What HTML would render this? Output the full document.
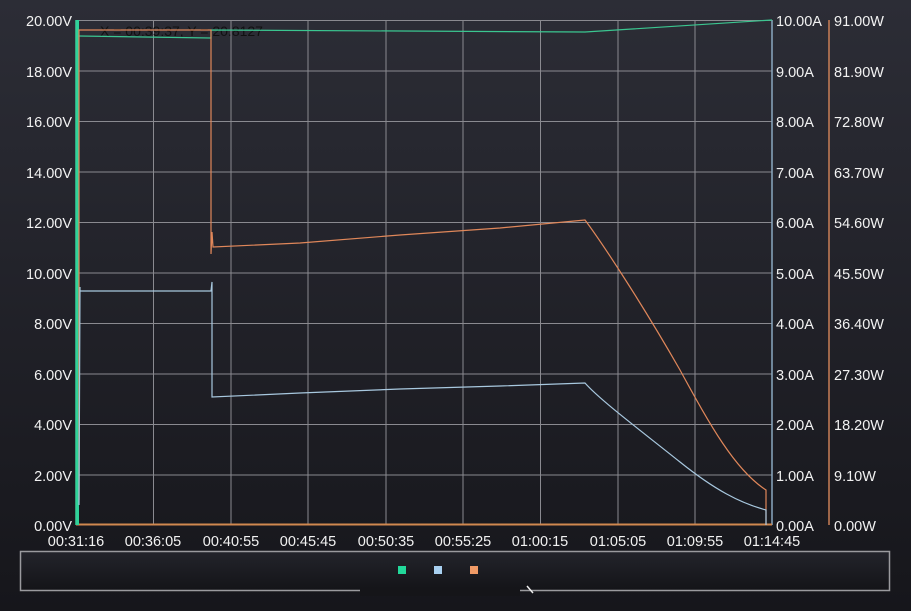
<!DOCTYPE html>
<html><head><meta charset="utf-8"><style>
html,body{margin:0;padding:0;width:911px;height:611px;overflow:hidden;background:linear-gradient(#2c2d36,#16161b);}
svg{position:absolute;left:0;top:0}
text{font-family:"Liberation Sans",sans-serif;font-size:14.5px;fill:#f2f2f2}
</style></head><body>
<svg width="911" height="611" viewBox="0 0 911 611">
<defs><linearGradient id="lg" x1="0" y1="0" x2="0" y2="1"><stop offset="0" stop-color="#23242b"/><stop offset="1" stop-color="#141418"/></linearGradient></defs>
<g stroke="#8a8a90" stroke-width="1">
<line x1="76" y1="20.5" x2="772" y2="20.5"/><line x1="76" y1="71" x2="772" y2="71"/><line x1="76" y1="121.5" x2="772" y2="121.5"/><line x1="76" y1="172" x2="772" y2="172"/><line x1="76" y1="222.5" x2="772" y2="222.5"/><line x1="76" y1="273" x2="772" y2="273"/><line x1="76" y1="323.5" x2="772" y2="323.5"/><line x1="76" y1="374" x2="772" y2="374"/><line x1="76" y1="424.5" x2="772" y2="424.5"/><line x1="76" y1="475" x2="772" y2="475"/>
<line x1="153.5" y1="20" x2="153.5" y2="525"/><line x1="231" y1="20" x2="231" y2="525"/><line x1="308" y1="20" x2="308" y2="525"/><line x1="386" y1="20" x2="386" y2="525"/><line x1="463" y1="20" x2="463" y2="525"/><line x1="540.5" y1="20" x2="540.5" y2="525"/><line x1="618" y1="20" x2="618" y2="525"/><line x1="695" y1="20" x2="695" y2="525"/>
</g>
<line x1="76" y1="20" x2="76" y2="525" stroke="#3ecf98" stroke-width="1.5"/>
<line x1="772" y1="20" x2="772" y2="525" stroke="#8aa8c0" stroke-width="1.5"/>
<line x1="829" y1="20" x2="829" y2="525" stroke="#c97f57" stroke-width="1.5"/>
<line x1="76" y1="524.5" x2="772" y2="524.5" stroke="#d0884f" stroke-width="2"/>
<text x="100" y="36" style="fill:#111;font-size:14px">X = 00:39:37, Y = 20.8127</text>
<polyline fill="none" stroke="#2fd29a" stroke-width="3" points="77.5,525 77.5,20"/>
<polyline fill="none" stroke="#3bc690" stroke-width="1.2" points="79,36 211,38 211,30 585,32 772,20"/>
<path fill="none" stroke="#e0875a" stroke-width="1.2" d="M79,500 L79,30 L211,30 L211,254 L212,232 L213,247 L300,243 L400,235 L500,228 L585,220 C600,240 640,300 680,370 C710,425 735,470 766,490 L766,525"/>
<path fill="none" stroke="#a8c8df" stroke-width="1.2" d="M79,505 L80,287 L80,291 L211,291 L212,282 L212,397 L300,393 L400,389 L500,386 L585,383 C600,400 640,430 680,462 C715,490 740,503 766,510 L766,525"/>
<g text-anchor="end">
<text x="72" y="26">20.00V</text><text x="72" y="77">18.00V</text><text x="72" y="127">16.00V</text><text x="72" y="178">14.00V</text><text x="72" y="228">12.00V</text><text x="72" y="279">10.00V</text><text x="72" y="329">8.00V</text><text x="72" y="380">6.00V</text><text x="72" y="430">4.00V</text><text x="72" y="481">2.00V</text><text x="72" y="531">0.00V</text>
</g>
<g>
<text x="776" y="26">10.00A</text><text x="776" y="77">9.00A</text><text x="776" y="127">8.00A</text><text x="776" y="178">7.00A</text><text x="776" y="228">6.00A</text><text x="776" y="279">5.00A</text><text x="776" y="329">4.00A</text><text x="776" y="380">3.00A</text><text x="776" y="430">2.00A</text><text x="776" y="481">1.00A</text><text x="776" y="531">0.00A</text>
<text x="834" y="26">91.00W</text><text x="834" y="77">81.90W</text><text x="834" y="127">72.80W</text><text x="834" y="178">63.70W</text><text x="834" y="228">54.60W</text><text x="834" y="279">45.50W</text><text x="834" y="329">36.40W</text><text x="834" y="380">27.30W</text><text x="834" y="430">18.20W</text><text x="834" y="481">9.10W</text><text x="834" y="531">0.00W</text>
</g>
<g text-anchor="middle">
<text x="76" y="546">00:31:16</text><text x="153" y="546">00:36:05</text><text x="231" y="546">00:40:55</text><text x="308" y="546">00:45:45</text><text x="386" y="546">00:50:35</text><text x="463" y="546">00:55:25</text><text x="540" y="546">01:00:15</text><text x="618" y="546">01:05:05</text><text x="695" y="546">01:09:55</text><text x="772" y="546">01:14:45</text>
</g>
<rect x="20.5" y="551.5" width="869" height="39" fill="url(#lg)" stroke="#9a9a9e" stroke-width="1.5"/>
<rect x="398" y="566" width="8" height="8" fill="#22d89a"/>
<rect x="434" y="566" width="8" height="8" fill="#a8d0f0"/>
<rect x="470" y="566" width="8" height="8" fill="#f09a66"/>
<rect x="360" y="588" width="160" height="8" fill="#151519"/>
<line x1="527" y1="586" x2="533" y2="593" stroke="#eee" stroke-width="1.5"/>
</svg>
</body></html>
